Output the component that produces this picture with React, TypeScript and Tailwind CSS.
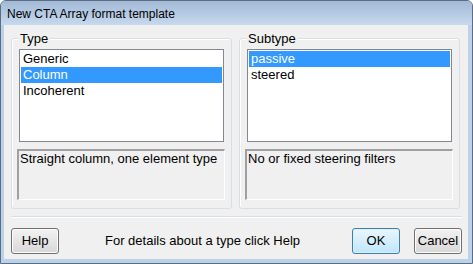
import React, { useState } from 'react';

const font = { fontFamily: '"Liberation Sans", Arial, sans-serif' };

const ListBox = ({ items, selected, onSelect }: { items: string[]; selected: number; onSelect: (i: number) => void }) => (
  <div className="ml-[7px] mt-[10px] h-[93px] w-[205px] border border-[#828790] bg-white p-px">
    {items.map((item, i) => (
      <div
        key={item}
        onClick={() => onSelect(i)}
        className={`h-[16px] pl-[2px] text-[13px] leading-[16px] ${i === selected ? 'bg-[#3399ff] text-white' : 'text-black'}`}
      >
        {item}
      </div>
    ))}
  </div>
);

const GroupBox = ({ label, children }: { label: string; children: React.ReactNode }) => (
  <div className="relative h-[171px] w-[221px] rounded-[3px] border border-[#d5dfe5] shadow-[inset_1px_1px_0_#ffffff]">
    <span className="absolute -top-[8px] left-[6px] bg-[#f0f0f0] px-[2px] text-[13px] leading-[15px] text-black">{label}</span>
    {children}
  </div>
);

const DescBox = ({ text }: { text: string }) => (
  <div className="ml-[5px] mt-[7px] h-[51px] w-[208px] border-l-2 border-t-2 border-b border-r border-l-[#a0a0a0] border-t-[#a0a0a0] border-b-[#ffffff] border-r-[#ffffff] pl-px text-[13px] leading-[15px] text-black">
    {text}
  </div>
);

const Button = ({ children, focused }: { children: React.ReactNode; focused?: boolean }) => (
  <button
    className={`h-[26px] w-[48px] rounded-[3px] border text-[13px] text-black ${
      focused
        ? 'border-[#3c7fb1] bg-gradient-to-b from-[#eaf6fd] to-[#bee6fd] shadow-[inset_0_0_0_1px_#dcf0fb]'
        : 'border-[#707070] bg-gradient-to-b from-[#f2f2f2] to-[#d8d8d8] shadow-[inset_0_0_0_1px_#fcfcfc]'
    }`}
  >
    {children}
  </button>
);

const types = ['Generic', 'Column', 'Incoherent'];
const typeDesc = ['General array, any layout', 'Straight column, one element type', 'Incoherent array'];
const subtypes = ['passive', 'steered'];
const subDesc = ['No or fixed steering filters', 'Electronically steered beam'];

export default function App() {
  const [type, setType] = useState(1);
  const [sub, setSub] = useState(0);

  return (
    <div style={font} className="flex h-[264px] w-[473px] flex-col overflow-hidden rounded-t-[6px] border border-[#5d6d80] bg-[#bcd2ea]">
      <div className="flex h-[24px] shrink-0 items-center bg-gradient-to-b from-[#a2b9d6] to-[#c7d9ee] pl-[6px] pt-[2px] text-[12px] text-black">
        New CTA Array format template
      </div>
      <div className="mb-[4px] ml-[3px] mr-[4px] flex flex-1 flex-col bg-[#f0f0f0] pl-[7px] pt-[13px]">
        <div className="flex gap-[7px]">
          <GroupBox label="Type">
            <ListBox items={types} selected={type} onSelect={setType} />
            <DescBox text={typeDesc[type]} />
          </GroupBox>
          <GroupBox label="Subtype">
            <ListBox items={subtypes} selected={sub} onSelect={setSub} />
            <DescBox text={subDesc[sub]} />
          </GroupBox>
        </div>
        <div className="mr-[6px] mt-[7px] h-[2px] border-b border-t border-b-white border-t-[#d5dfe5]" />
        <div className="mt-[10px] flex items-center pr-[6px]">
          <Button>Help</Button>
          <span className="ml-[46px] text-[13px] text-black">For details about a type click Help</span>
          <div className="flex-1" />
          <Button focused>OK</Button>
          <div className="w-[14px]" />
          <Button>Cancel</Button>
        </div>
      </div>
    </div>
  );
}
